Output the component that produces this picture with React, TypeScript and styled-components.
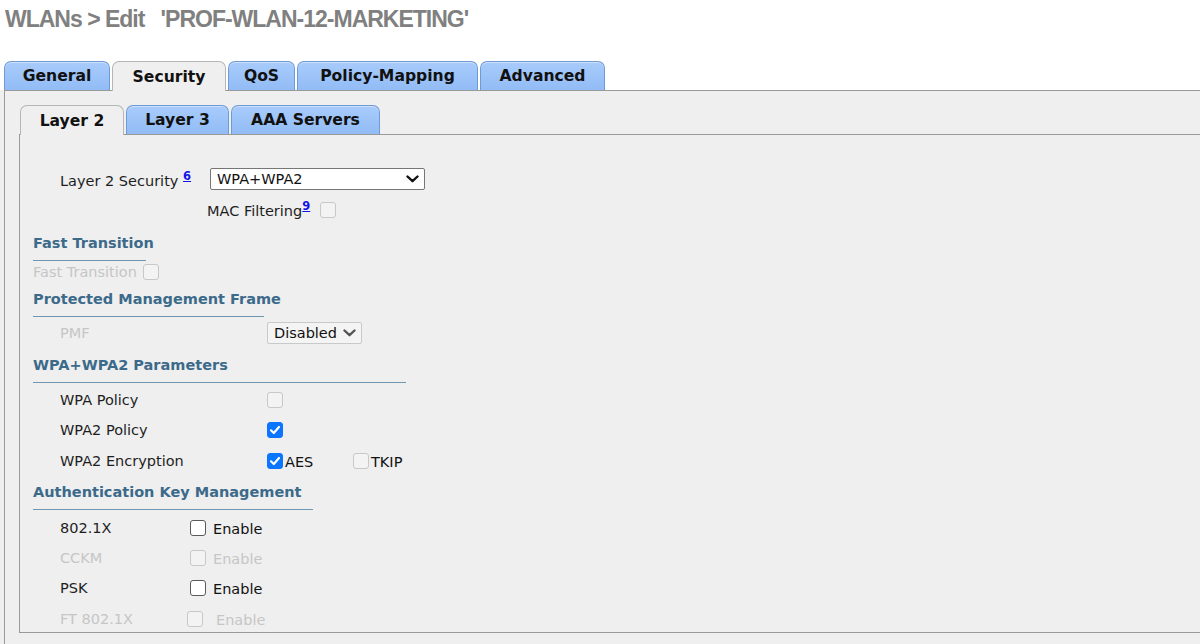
import React from "react";
import styled, { createGlobalStyle, css } from "styled-components";

const GlobalStyle = createGlobalStyle`
  html, body { margin: 0; padding: 0; background: #ffffff; }
  body { font-family: "DejaVu Sans", Verdana, sans-serif; overflow: hidden; }
  * { box-sizing: border-box; }
`;

const Page = styled.div`
  width: 1200px;
  height: 644px;
  overflow: hidden;
  background: #ffffff;
  display: flex;
  flex-direction: column;
`;

const Title = styled.h1`
  margin: 0;
  padding: 6px 0 0 5px;
  height: 61px;
  flex: 0 0 61px;
  font-family: "Liberation Sans", Arial, sans-serif;
  font-weight: bold;
  font-size: 23px;
  line-height: 26px;
  letter-spacing: -1px;
  color: #808080;
  white-space: pre;
`;

const TabBar = styled.div<{ $pad: number }>`
  display: flex;
  align-items: flex-end;
  gap: 2px;
  height: 29px;
  flex: 0 0 29px;
  padding-left: ${(p) => p.$pad}px;
  position: relative;
  z-index: 1;
`;

const Tab = styled.div<{ $w: number; $active?: boolean }>`
  width: ${(p) => p.$w}px;
  height: 29px;
  display: flex;
  align-items: center;
  justify-content: center;
  border: 1px solid #6f9bd4;
  border-bottom: none;
  border-radius: 7px 7px 0 0;
  background: linear-gradient(#a8cbfb, #92bcf6);
  box-shadow: inset 0 1px 0 #cde1ff;
  font-weight: bold;
  font-size: 15.6px;
  color: #111;
  white-space: nowrap;
  ${(p) =>
    p.$active &&
    css`
      height: 30px;
      margin-bottom: -1px;
      background: #efefef;
      border-color: #b6b6b6;
      box-shadow: none;
    `}
`;

const Stage = styled.div`
  flex: 1;
  background: #efefef;
  padding-left: 4px;
  display: flex;
`;

const OuterPanel = styled.div`
  flex: 1;
  border-top: 1px solid #999;
  border-left: 1px solid #999;
  padding: 14px 0 0 14px;
  display: flex;
  flex-direction: column;
`;

const InnerPanel = styled.div`
  border-top: 1px solid #999;
  border-left: 1px solid #999;
  border-bottom: 1px solid #999;
  padding: 33px 0 3px 13px;
  display: flex;
  flex-direction: column;
  font-size: 14.5px;
`;

const Row = styled.div<{ $mt: number; $indent?: number; $h?: number }>`
  display: flex;
  align-items: center;
  height: ${(p) => p.$h ?? 20}px;
  margin-top: ${(p) => p.$mt}px;
  padding-left: ${(p) => p.$indent ?? 27}px;
  white-space: nowrap;
`;

const Label = styled.span<{ $w?: number; $disabled?: boolean; $shift?: number }>`
  display: inline-flex;
  align-items: center;
  ${(p) => (p.$w ? `flex: 0 0 ${p.$w}px;` : "")}
  color: ${(p) => (p.$disabled ? "#c6c6c6" : "#1e1e1e")};
  white-space: nowrap;
  position: relative;
  top: ${(p) => p.$shift ?? 0}px;
`;

const HelpLink = styled.a<{ $ml?: number }>`
  font-size: 11.5px;
  font-weight: bold;
  color: #1414e6;
  text-decoration: underline;
  position: relative;
  top: -5px;
  margin-left: ${(p) => p.$ml ?? 0}px;
`;

const SectionHead = styled.div<{ $w: number; $mt: number }>`
  width: ${(p) => p.$w}px;
  margin-top: ${(p) => p.$mt}px;
  font-weight: bold;
  font-size: 14.5px;
  line-height: 18px;
  padding-bottom: 8px;
  border-bottom: 1px solid #6f96b1;
  color: #3c6a8a;
  white-space: nowrap;
`;

const SelectBox = styled.div<{ $w: number; $muted?: boolean }>`
  display: flex;
  align-items: center;
  justify-content: space-between;
  width: ${(p) => p.$w}px;
  height: 22px;
  padding: 0 5px 0 6px;
  border: 1px solid ${(p) => (p.$muted ? "#c9c9c9" : "#767676")};
  border-radius: 2px;
  background: ${(p) => (p.$muted ? "#f4f4f4" : "#ffffff")};
  color: #111;
  font-size: 14.5px;
`;

type BoxState = "on" | "off" | "disabled";

const Box = styled.span<{ $state: BoxState; $ml?: number }>`
  display: inline-flex;
  align-items: center;
  justify-content: center;
  flex: 0 0 16px;
  width: 16px;
  height: 16px;
  border-radius: 3px;
  margin-left: ${(p) => p.$ml ?? 0}px;
  ${(p) =>
    p.$state === "on"
      ? css`
          background: #0a75ff;
          border: 1px solid #0a75ff;
        `
      : p.$state === "off"
      ? css`
          background: #ffffff;
          border: 1px solid #5a5a5a;
        `
      : css`
          background: #f3f3f3;
          border: 1px solid #c8c8c8;
        `}
`;

const OptText = styled.span<{ $w?: number; $disabled?: boolean; $ml?: number }>`
  ${(p) => (p.$w ? `flex: 0 0 ${p.$w}px;` : "")}
  margin-left: ${(p) => p.$ml ?? 2}px;
  color: ${(p) => (p.$disabled ? "#c6c6c6" : "#111")};
  position: relative;
  top: 1px;
`;

const Chevron = ({ color }: { color: string }) => (
  <svg width="13" height="8" viewBox="0 0 13 8">
    <path d="M1.5 1.5 L6.5 6.2 L11.5 1.5" fill="none" stroke={color} strokeWidth="2.4" strokeLinecap="round" strokeLinejoin="round" />
  </svg>
);

const CheckBox = ({ state, ml }: { state: BoxState; ml?: number }) => (
  <Box $state={state} $ml={ml}>
    {state === "on" && (
      <svg width="12" height="12" viewBox="0 0 12 12">
        <path d="M2 6.3 L4.8 9 L10 3" fill="none" stroke="#fff" strokeWidth="2.2" strokeLinecap="round" strokeLinejoin="round" />
      </svg>
    )}
  </Box>
);

const mainTabs = [
  { name: "General", w: 106 },
  { name: "Security", w: 114, active: true },
  { name: "QoS", w: 67 },
  { name: "Policy-Mapping", w: 181 },
  { name: "Advanced", w: 125 },
];

const subTabs = [
  { name: "Layer 2", w: 104, active: true },
  { name: "Layer 3", w: 103 },
  { name: "AAA Servers", w: 149 },
];

const akm = [
  { name: "802.1X", state: "off" as BoxState, mt: 8, col: 130, gap: 7 },
  { name: "CCKM", state: "disabled" as BoxState, mt: 10, col: 130, gap: 7, dis: true },
  { name: "PSK", state: "off" as BoxState, mt: 10, col: 130, gap: 7 },
  { name: "FT 802.1X", state: "disabled" as BoxState, mt: 11, col: 127, gap: 13, dis: true },
];

export default function App() {
  return (
    <Page>
      <GlobalStyle />
      <Title>{"WLANs > Edit   'PROF-WLAN-12-MARKETING'"}</Title>
      <TabBar $pad={4}>
        {mainTabs.map((t) => (
          <Tab key={t.name} $w={t.w} $active={t.active}>
            {t.name}
          </Tab>
        ))}
      </TabBar>
      <Stage>
        <OuterPanel>
          <TabBar $pad={1}>
            {subTabs.map((t) => (
              <Tab key={t.name} $w={t.w} $active={t.active}>
                {t.name}
              </Tab>
            ))}
          </TabBar>
          <InnerPanel>
            <Row $mt={0} $h={22}>
              <Label $w={150} $shift={2}>
                Layer 2 Security&nbsp;<HelpLink href="#">6</HelpLink>
              </Label>
              <SelectBox $w={215}>
                <span>WPA+WPA2</span>
                <Chevron color="#111" />
              </SelectBox>
            </Row>
            <Row $mt={10} $indent={174}>
              <Label $shift={1}>
                MAC Filtering<HelpLink href="#">9</HelpLink>
              </Label>
              <CheckBox state="disabled" ml={10} />
            </Row>

            <SectionHead $w={113} $mt={14}>Fast Transition</SectionHead>
            <Row $mt={1} $indent={0}>
              <Label $disabled>Fast Transition</Label>
              <CheckBox state="disabled" ml={6} />
            </Row>

            <SectionHead $w={231} $mt={8}>Protected Management Frame</SectionHead>
            <Row $mt={5} $h={22}>
              <Label $w={207} $disabled>PMF</Label>
              <SelectBox $w={95} $muted>
                <span>Disabled</span>
                <Chevron color="#555" />
              </SelectBox>
            </Row>

            <SectionHead $w={373} $mt={12}>WPA+WPA2 Parameters</SectionHead>
            <Row $mt={7}>
              <Label $w={207}>WPA Policy</Label>
              <CheckBox state="disabled" />
            </Row>
            <Row $mt={10}>
              <Label $w={207}>WPA2 Policy</Label>
              <CheckBox state="on" />
            </Row>
            <Row $mt={11}>
              <Label $w={207}>WPA2 Encryption</Label>
              <CheckBox state="on" />
              <OptText $w={68}>AES</OptText>
              <CheckBox state="disabled" />
              <OptText>TKIP</OptText>
            </Row>

            <SectionHead $w={280} $mt={12}>Authentication Key Management</SectionHead>
            {akm.map((r) => (
              <Row key={r.name} $mt={r.mt}>
                <Label $w={r.col} $disabled={r.dis}>{r.name}</Label>
                <CheckBox state={r.state} />
                <OptText $ml={r.gap} $disabled={r.dis}>Enable</OptText>
              </Row>
            ))}
          </InnerPanel>
        </OuterPanel>
      </Stage>
    </Page>
  );
}
